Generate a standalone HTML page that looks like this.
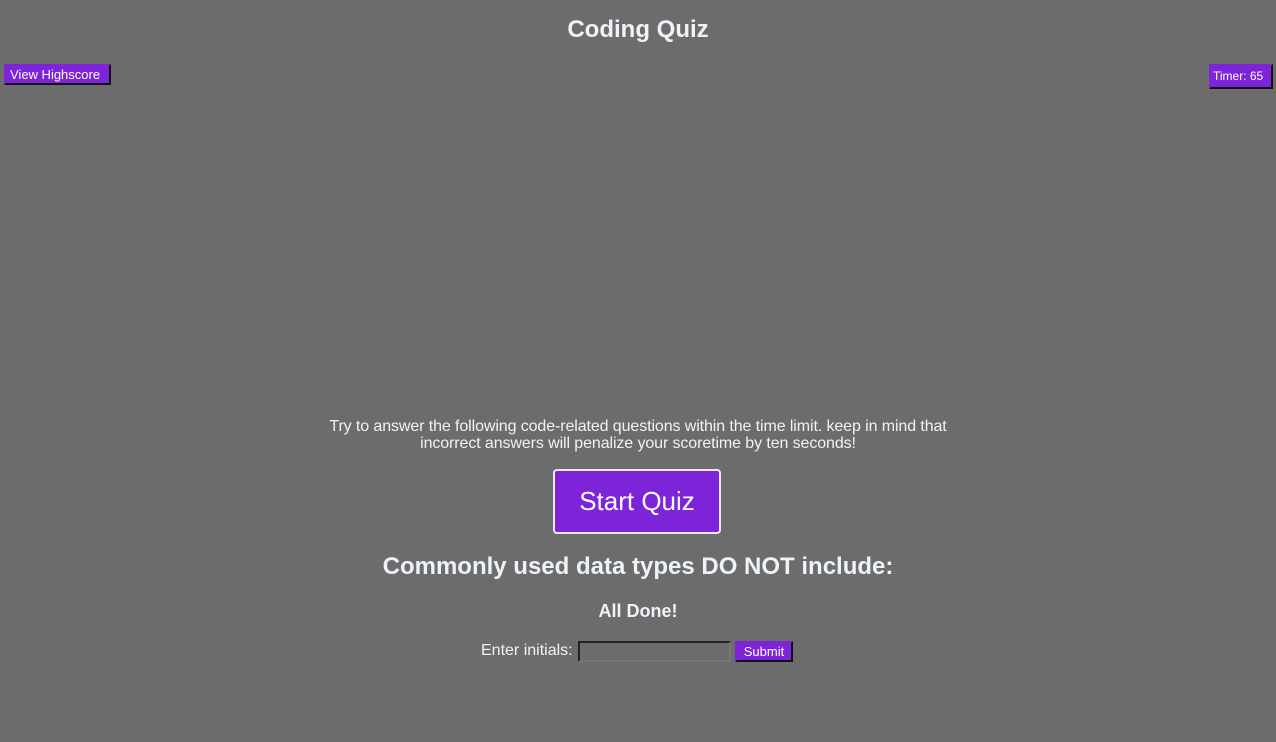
<!DOCTYPE html>
<html><head><style>
html,body{margin:0;padding:0;width:1276px;height:742px;background:#6c6c6c;overflow:hidden;font-family:"Liberation Sans",Arial,sans-serif;color:#eef2f9;}
.a{position:absolute;}
.btn{background:#7e24d8;color:#fff;border:2px solid;border-color:#7e24d8 #111 #111 #7e24d8;font-size:13px;padding:0 4px;line-height:15px;box-sizing:border-box;}
</style></head><body>
<div class="a" style="left:0;width:1276px;top:15px;text-align:center;font-weight:bold;font-size:24px;line-height:30px;">Coding Quiz</div>
<div class="a btn" style="left:4px;top:64px;width:107px;height:21px;padding-top:1px;">View Highscore</div>
<div class="a btn" style="left:1209px;top:64px;width:64px;height:25px;font-size:12px;padding-top:3px;padding-left:2px;">Timer: 65</div>
<div class="a" style="left:318px;width:640px;top:418px;text-align:center;font-size:16px;line-height:17px;letter-spacing:-0.1px;">Try to answer the following code-related questions within the time limit. keep in mind that incorrect answers will penalize your scoretime by ten seconds!</div>
<div class="a" style="left:553px;top:469px;width:168px;height:65px;box-sizing:border-box;background:#7e24d8;border:2px solid #f0e8f4;border-radius:4px;text-align:center;font-size:26px;line-height:61px;color:#fff;">Start Quiz</div>
<div class="a" style="left:0;width:1276px;top:552px;text-align:center;font-weight:bold;font-size:24px;line-height:30px;">Commonly used data types DO NOT include:</div>
<div class="a" style="left:0;width:1276px;top:600px;text-align:center;font-weight:bold;font-size:18px;line-height:22px;">All Done!</div>
<div class="a" style="left:481px;top:641px;font-size:16px;line-height:20px;">Enter initials:</div>
<div class="a" style="left:578px;top:641px;width:153px;height:21px;box-sizing:border-box;border:2px solid;border-color:#222 #777 #777 #222;"></div>
<div class="a btn" style="left:735px;top:641px;width:58px;height:21px;padding-top:1px;text-align:center;">Submit</div>
</body></html>
